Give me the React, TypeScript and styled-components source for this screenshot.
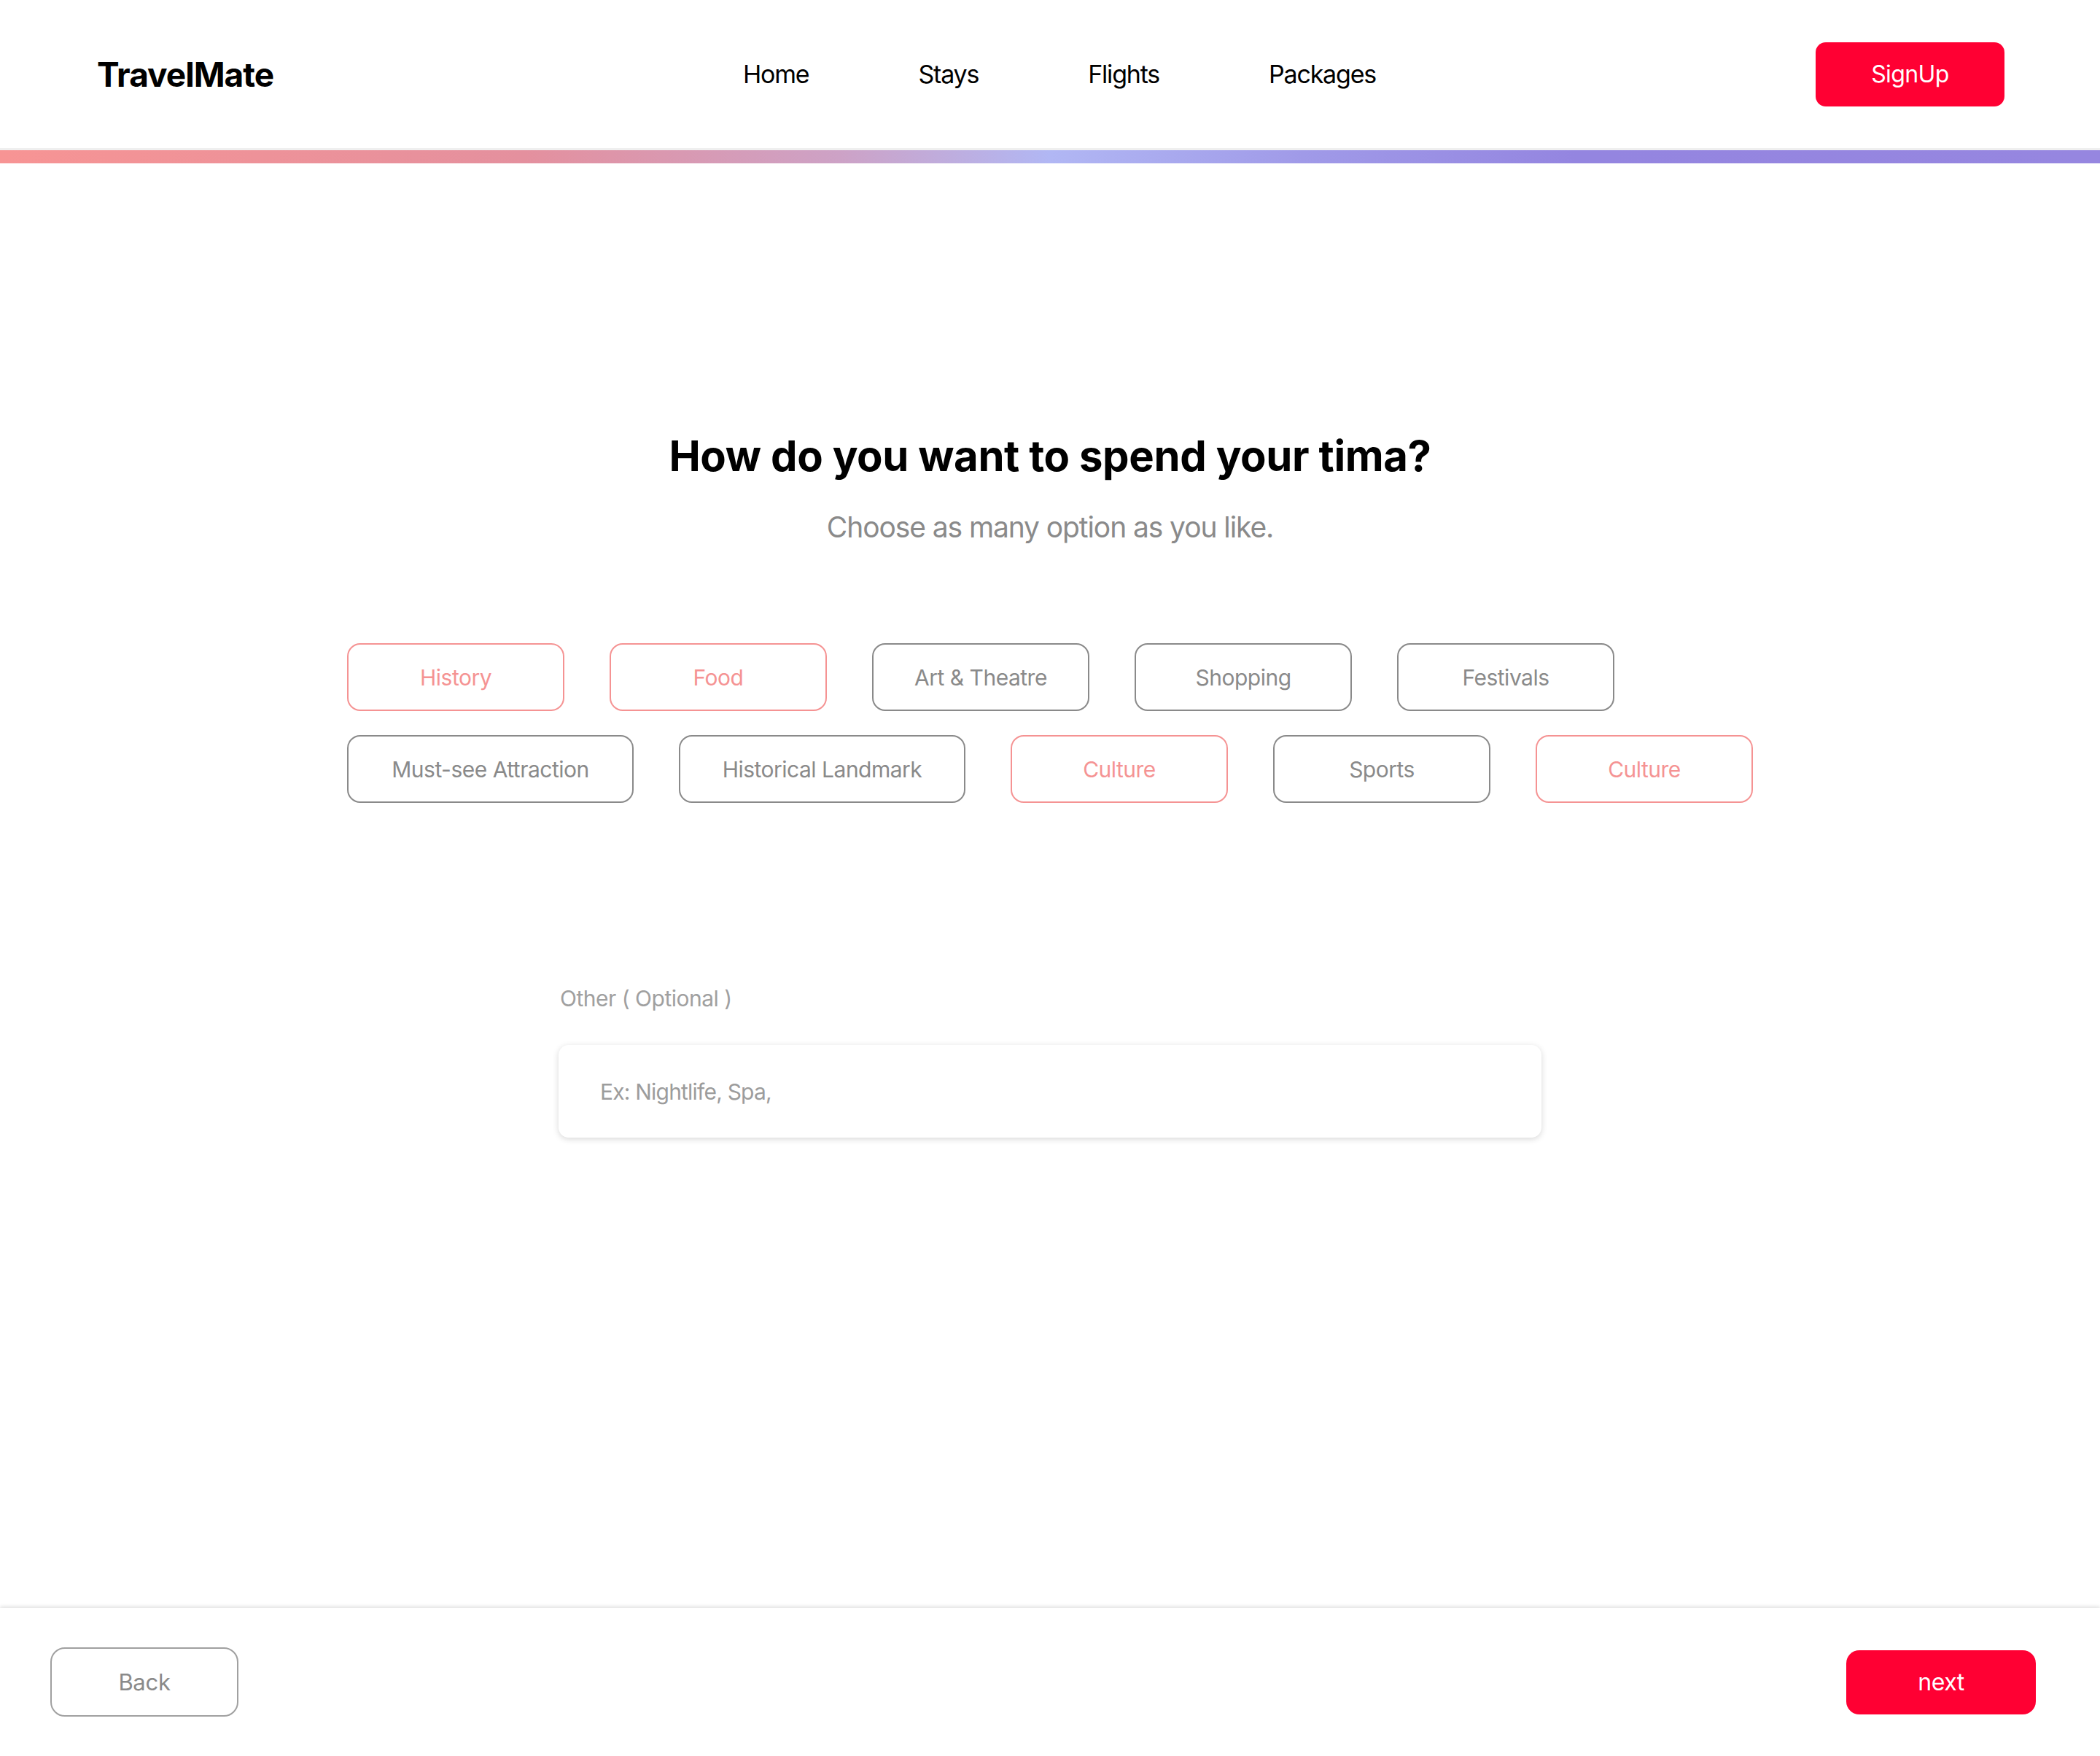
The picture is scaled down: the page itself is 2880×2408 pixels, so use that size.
import React from 'react';
import styled, { createGlobalStyle } from 'styled-components';

const interests = [
  { label: 'History', picked: true, wide: false },
  { label: 'Food', picked: true, wide: false },
  { label: 'Art & Theatre', picked: false, wide: false },
  { label: 'Shopping', picked: false, wide: false },
  { label: 'Festivals', picked: false, wide: false },
  { label: 'Must-see Attraction', picked: false, wide: true },
  { label: 'Historical Landmark', picked: false, wide: true },
  { label: 'Culture', picked: true, wide: false },
  { label: 'Sports', picked: false, wide: false },
  { label: 'Culture', picked: true, wide: false },
];

const App = () => {
  return (
    <Page>
      <GlobalStyle />
      <Header>
        <Logo>TravelMate</Logo>
        <Nav>
          <NavLink>Home</NavLink>
          <NavLink>Stays</NavLink>
          <NavLink>Flights</NavLink>
          <NavLink>Packages</NavLink>
        </Nav>
        <SignUpButton>SignUp</SignUpButton>
      </Header>
      <GradientBar />

      <Main>
        <Heading>How do you want to spend your tima?</Heading>
        <SubHeading>Choose as many option as you like.</SubHeading>

        <ChipGrid>
          {interests.map((item, i) => (
            <Chip key={i} $picked={item.picked} $wide={item.wide}>
              {item.label}
            </Chip>
          ))}
        </ChipGrid>

        <OtherField>
          <FieldLabel>Other ( Optional )</FieldLabel>
          <TextInput placeholder="Ex: Nightlife, Spa," />
        </OtherField>
      </Main>

      <Footer>
        <BackButton>Back</BackButton>
        <NextButton>next</NextButton>
      </Footer>
    </Page>
  );
};

const RED = '#ff0033';
const PINK = '#f59393';
const GREY = '#8a8a8a';

const GlobalStyle = createGlobalStyle`
  html, body {
    margin: 0;
    padding: 0;
    background: #ffffff;
  }
  body {
    font-family: Inter, "Noto Sans", "Liberation Sans", sans-serif;
    -webkit-font-smoothing: antialiased;
  }
  * {
    box-sizing: border-box;
  }
`;

const Page = styled.div`
  display: flex;
  flex-direction: column;
  min-height: 100vh;
  background: #fff;
`;

const Header = styled.header`
  display: grid;
  grid-template-columns: 1fr auto 1fr;
  align-items: center;
  height: 206px;
  padding: 0 131px 0 133px;
  border-bottom: 3px solid #efefef;
`;

const Logo = styled.div`
  justify-self: start;
  font-size: 46px;
  font-weight: 700;
  letter-spacing: -1px;
  color: #000;
`;

const Nav = styled.nav`
  display: flex;
  align-items: center;
  gap: 150px;
  padding-left: 24px;
`;

const NavLink = styled.a`
  font-size: 34px;
  font-weight: 400;
  letter-spacing: -1.2px;
  color: #000;
  cursor: pointer;
`;

const SignUpButton = styled.button`
  justify-self: end;
  width: 259px;
  height: 88px;
  border: none;
  border-radius: 14px;
  background: ${RED};
  color: #fff;
  font-family: inherit;
  font-size: 32px;
  letter-spacing: -0.6px;
  cursor: pointer;
`;

const GradientBar = styled.div`
  height: 18px;
  background: linear-gradient(
    90deg,
    #f79494 0%,
    #e4909e 25%,
    #cda2c6 40%,
    #b1b7f4 50%,
    #a09ae8 62%,
    #9485e0 75%,
    #9686e0 100%
  );
`;

const Main = styled.main`
  flex: 1;
  display: flex;
  flex-direction: column;
  align-items: center;
  padding-top: 369px;
`;

const Heading = styled.h1`
  margin: 0;
  font-size: 58px;
  line-height: 64px;
  font-weight: 700;
  letter-spacing: -0.4px;
  color: #000;
`;

const SubHeading = styled.p`
  margin: 42px 0 0;
  font-size: 39px;
  line-height: 48px;
  font-weight: 400;
  letter-spacing: -1.1px;
  color: ${GREY};
`;

const ChipGrid = styled.div`
  display: flex;
  flex-wrap: wrap;
  gap: 33px 62px;
  width: 1928px;
  margin-top: 135px;
`;

const Chip = styled.button<{ $picked: boolean; $wide: boolean }>`
  display: flex;
  align-items: center;
  justify-content: center;
  width: ${(p) => (p.$wide ? '393px' : '298px')};
  height: 93px;
  border-radius: 18px;
  border: 2px solid ${(p) => (p.$picked ? PINK : GREY)};
  background: #fff;
  color: ${(p) => (p.$picked ? PINK : GREY)};
  font-family: inherit;
  font-size: 30px;
  letter-spacing: -0.5px;
  cursor: pointer;
`;

const OtherField = styled.div`
  display: flex;
  flex-direction: column;
  width: 1348px;
  margin-top: 250px;
`;

const FieldLabel = styled.label`
  padding-left: 2px;
  font-size: 30px;
  line-height: 36px;
  letter-spacing: -0.5px;
  color: #a0a0a0;
`;

const TextInput = styled.input`
  margin-top: 46px;
  height: 127px;
  padding: 0 57px;
  border: none;
  border-radius: 14px;
  background: #fff;
  box-shadow: 0 2px 8px rgba(0, 0, 0, 0.16);
  font-family: inherit;
  font-size: 30px;
  letter-spacing: -0.8px;
  color: #333;
  outline: none;

  &::placeholder {
    color: #9c9c9c;
  }
`;

const Footer = styled.footer`
  display: flex;
  align-items: center;
  justify-content: space-between;
  height: 203px;
  padding: 0 88px 0 69px;
  box-shadow: 0 -2px 5px rgba(0, 0, 0, 0.12);
  background: #fff;
`;

const BackButton = styled.button`
  width: 258px;
  height: 95px;
  border: 2px solid #a0a0a0;
  border-radius: 20px;
  background: #fff;
  color: ${GREY};
  font-family: inherit;
  font-size: 31px;
  letter-spacing: -0.3px;
  cursor: pointer;
`;

const NextButton = styled.button`
  width: 260px;
  height: 88px;
  border: none;
  border-radius: 18px;
  background: ${RED};
  color: #fff;
  font-family: inherit;
  font-size: 32px;
  letter-spacing: -0.5px;
  cursor: pointer;
`;

export default App;
